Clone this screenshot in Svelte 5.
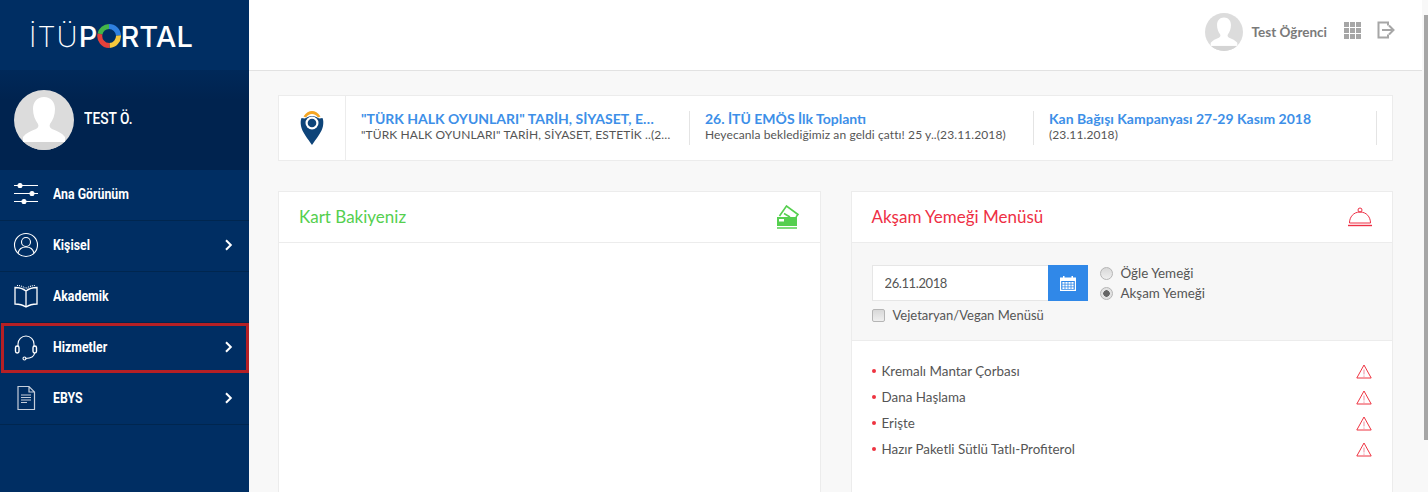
<script>
	const navItems = [
		{ label: 'Ana Görünüm', icon: 'sliders', arrow: false },
		{ label: 'Kişisel', icon: 'person', arrow: true },
		{ label: 'Akademik', icon: 'book', arrow: false },
		{ label: 'Hizmetler', icon: 'headset', arrow: true, marked: true },
		{ label: 'EBYS', icon: 'doc', arrow: true }
	];

	const news = [
		{
			title: '"TÜRK HALK OYUNLARI" TARİH, SİYASET, ESTETİK',
			text: '"TÜRK HALK OYUNLARI" TARİH, SİYASET, ESTETİK ..(26.11.2018)'
		},
		{
			title: '26. İTÜ EMÖS İlk Toplantı',
			text: 'Heyecanla beklediğimiz an geldi çattı! 25 y..(23.11.2018)'
		},
		{
			title: 'Kan Bağışı Kampanyası 27-29 Kasım 2018',
			text: '(23.11.2018)'
		}
	];

	const meals = [
		'Kremalı Mantar Çorbası',
		'Dana Haşlama',
		'Erişte',
		'Hazır Paketli Sütlü Tatlı-Profiterol'
	];
</script>

{#snippet avatar(size)}
	<svg class="avatar" width={size} height={size} viewBox="0 0 60 60">
		<defs>
			<clipPath id="avatar-clip-{size}"><circle cx="30" cy="30" r="30" /></clipPath>
		</defs>
		<circle cx="30" cy="30" r="30" fill="#dcdcdc" />
		<g clip-path="url(#avatar-clip-{size})">
			<path d="M30 7c-7 0-11 5-11 12 0 6 2 11 5 15 1 2 0 4-2 5-5 2-10 4-13 8v5h42v-5c-3-4-8-6-13-8-2-1-3-3-2-5 3-4 5-9 5-15 0-7-4-12-11-12z" fill="#fff" />
			<rect x="0" y="52" width="60" height="8" fill="#d4d4d4" />
		</g>
	</svg>
{/snippet}

<div class="page">
	<aside class="sidebar">
		<div class="logo">
			<span class="logo-thin">İTÜ</span><span class="logo-bold">P</span>
			<svg class="logo-ring" width="24" height="24" viewBox="0 0 24 24" fill="none" stroke-width="5">
				<path d="M3 10a9.500 9.500 0 0 1 9-7.500" stroke="#43b649" />
				<path d="M12 2.500a9.500 9.500 0 0 1 9.500 9" stroke="#2f80e0" />
				<path d="M21.500 11.500a9.500 9.500 0 0 1-9 10" stroke="#f6c83c" />
				<path d="M12.500 21.500a9.500 9.500 0 0 1-9.500-11.500" stroke="#e5413b" />
			</svg>
			<span class="logo-bold">RTAL</span>
		</div>

		<div class="user">
			{@render avatar(60)}
			<span class="user-name">TEST Ö.</span>
		</div>

		<nav>
			{#each navItems as item}
				<a class="nav-row" class:marked={item.marked} href="#top">
					<svg class="nav-icon" width="28" height="28" viewBox="0 0 28 28" fill="none" stroke="#fff" stroke-width="1.100">
						{#if item.icon === 'sliders'}
							<path d="M2 5.500h24M2 13.500h24M2 21.500h24" />
							<circle cx="8" cy="5.500" r="2" fill="#fff" />
							<circle cx="20" cy="13.500" r="2" fill="#fff" />
							<circle cx="12" cy="21.500" r="2" fill="#fff" />
						{:else if item.icon === 'person'}
							<circle cx="14" cy="14" r="11.500" />
							<circle cx="14" cy="11" r="4.500" />
							<path d="M6 22c1-4 4-6 8-6s7 2 8 6" />
						{:else if item.icon === 'book'}
							<path d="M14 9C11 6.500 7 5.500 3 5.500V22c4 0 8 1 11 3 3-2 7-3 11-3V5.500c-4 0-8 1-11 3.500zM14 9v16" stroke-width="1.300" />
							<path d="M5 3.500c3 0 6 1 9 3 3-2 6-3 9-3" stroke-dasharray="1 1" />
						{:else if item.icon === 'headset'}
							<path d="M6 14v-3a8 8 0 0 1 16 0v3" />
							<rect x="3.500" y="13" width="3.500" height="7" rx="1.700" stroke-width="1.400" />
							<rect x="21" y="13" width="3.500" height="7" rx="1.700" stroke-width="1.400" />
							<path d="M22.500 20c0 3-2 5-9 5.500" />
							<circle cx="12.500" cy="25.500" r="1.500" />
						{:else}
							<path d="M6 2.500h11l5.500 5.500v17.500H6zM17 2.500V8h5.500" stroke="#c5cedb" stroke-width="1.200" />
							<path d="M9 11h10M9 13.500h10M9 16h10M9 18.500h6" stroke="#c5cedb" />
						{/if}
					</svg>
					<span class="nav-label"><span>{item.label}</span></span>
					{#if item.arrow}
						<svg class="nav-arrow" width="9" height="12" viewBox="0 0 9 12" fill="none" stroke="#fff" stroke-width="2">
							<path d="M2 1.200 6.800 6 2 10.800" />
						</svg>
					{/if}
				</a>
			{/each}
		</nav>
	</aside>

	<div class="content">
		<header class="topbar">
			{@render avatar(38)}
			<span class="top-name">Test Öğrenci</span>
			<div class="apps">
				{#each Array(9) as _}
					<i></i>
				{/each}
			</div>
			<svg class="logout" width="18" height="18" viewBox="0 0 18 18" fill="none" stroke="#a6a6a6" stroke-width="2">
				<path d="M11 4.500V1.500H1.500v15H11v-3" />
				<path d="M5 9h10" />
				<path d="M12 4.500 16.500 9 12 13.500" />
			</svg>
		</header>

		<main>
			<section class="ticker">
				<div class="ticker-icon">
					<svg width="24" height="36" viewBox="0 0 24 36">
						<path d="M3.500 6.500C6 2.500 9 1 12 1s6 1.500 8.500 5.500L18 7.500C16.500 5.500 14.500 4 12 4S7.500 5.500 6 7.500z" fill="#f5a623" />
						<path d="M1.500 8C.5 10 .5 13 1 16c1 6 7 13 11 19 4-6 10-13 11-19 .5-3 .5-6-.5-8-1.500 0-3 1-4.500 0-1.500-1-3-2-6-2s-4.500 1-6 2c-1.500 1-3 0-4.500 0z" fill="#0e4479" />
						<circle cx="12" cy="13" r="6.500" fill="#fff" />
						<circle cx="12" cy="13" r="4.300" fill="#0e4479" />
					</svg>
				</div>
				{#each news as item}
					<div class="ticker-item">
						<div class="ticker-title">{item.title}</div>
						<div class="ticker-text">{item.text}</div>
					</div>
				{/each}
			</section>

			<div class="cards">
				<section class="card">
					<div class="card-head">
						<h2 class="green">Kart Bakiyeniz</h2>
						<svg width="24" height="24" viewBox="0 0 24 24">
							<path d="M3.500 11 10.500 1 22 9.500 20 12" fill="none" stroke="#55cf4f" stroke-width="1.600" />
							<path d="M8 8.500l6 3.500" stroke="#55cf4f" stroke-width="1.500" />
							<rect x="1" y="12" width="20" height="9" fill="#55cf4f" />
							<rect x="3" y="14" width="5" height="2.500" fill="#fff" />
							<rect x="1" y="22" width="20" height="2" fill="#7fdc7a" />
						</svg>
					</div>
				</section>

				<section class="card">
					<div class="card-head">
						<h2 class="red">Akşam Yemeği Menüsü</h2>
						<svg width="24" height="20" viewBox="0 0 24 20" fill="none" stroke="#ee2f45">
							<circle cx="12" cy="3" r="2" />
							<path d="M1.500 16c0-6 4-11 10.500-11s10.500 5 10.500 11z" />
							<path d="M0 18.500h24" stroke-width="1.400" />
						</svg>
					</div>

					<div class="filters">
						<div class="filter-row">
							<div class="date-group">
								<input class="date-input" value="26.11.2018" readonly />
								<span class="date-btn">
									<svg width="16" height="16" viewBox="0 0 16 16" fill="#fff">
										<path d="M0 2.500h3V1h1.500v1.500h7V1H13v1.500h3V16H0zM1.200 6v8.800h13.600V6z" />
										<path d="M2.400 7h2.200v1.800H2.400zM5.400 7h2.200v1.800H5.400zM8.400 7h2.200v1.800H8.400zM11.400 7h2.200v1.800h-2.200zM2.400 9.600h2.200v1.800H2.400zM5.400 9.600h2.200v1.800H5.400zM8.400 9.600h2.200v1.800H8.400zM11.400 9.600h2.200v1.800h-2.200zM2.400 12.200h2.200V14H2.400zM5.400 12.200h2.200V14H5.400zM8.400 12.200h2.200V14H8.400zM11.400 12.200h2.200V14h-2.200z" />
									</svg>
								</span>
							</div>
							<div class="radios">
								<label><input type="radio" name="meal" /> Öğle Yemeği</label>
								<label><input type="radio" name="meal" checked /> Akşam Yemeği</label>
							</div>
						</div>
						<label class="vegan"><input type="checkbox" /> Vejetaryan/Vegan Menüsü</label>
					</div>

					<ul class="meals">
						{#each meals as meal}
							<li>
								<span class="dot"></span>
								<span class="meal-name">{meal}</span>
								<svg width="16" height="15" viewBox="0 0 16 15" fill="none" stroke="#ee3340">
									<path d="M8 1 .8 14h14.400z" />
									<path d="M8 5.500v5M8 11.500v1.200" stroke="#f0a0b0" stroke-width="1.200" />
								</svg>
							</li>
						{/each}
					</ul>
				</section>
			</div>
		</main>
	</div>

	<div class="scroll-thumb"></div>
</div>

<style>
	:global(body) {
		margin: 0;
		background: #f8f8f8;
	}

	.page {
		position: relative;
		display: flex;
		height: 492px;
		overflow: hidden;
		font-family: Lato, "Noto Sans", sans-serif;
		color: #555;
	}

	.sidebar {
		width: 249px;
		flex-shrink: 0;
		background: #002e63;
	}

	.logo {
		display: flex;
		align-items: center;
		height: 70px;
		padding: 2px 0 0 29px;
		box-sizing: border-box;
		color: #fff;
		font-family: Inter, sans-serif;
		font-size: 29px;
		line-height: 1;
	}

	.logo-thin {
		font-weight: 200;
		letter-spacing: 1px;
	}

	.logo-bold {
		font-weight: 500;
		letter-spacing: 0.100px;
	}

	.logo-ring {
		margin: 0 -0.500px;
	}

	.user {
		display: flex;
		align-items: center;
		gap: 10px;
		height: 100px;
		padding-left: 14px;
		background: linear-gradient(#002e63 -30%, #00234f 30%);
	}

	.avatar {
		flex-shrink: 0;
		display: block;
	}

	.user-name {
		display: inline-block;
		color: #fff;
		font-family: Roboto, sans-serif;
		font-size: 16px;
		font-weight: 500;
		transform: scaleX(0.86);
		transform-origin: left;
		margin-top: -3px;
	}

	.nav-row {
		display: flex;
		align-items: center;
		box-sizing: border-box;
		height: 51px;
		padding: 0 14px 2px 12px;
		border-bottom: 1px solid #00264f;
		color: #fff;
		text-decoration: none;
		font-family: Roboto, sans-serif;
		font-size: 14px;
		font-weight: 700;
	}

	.nav-row.marked {
		margin: 0 0 1px 1px;
		padding: 0 11px 3px 8px;
		border: 3px solid #b52025;
		height: 50px;
	}

	.nav-icon {
		flex-shrink: 0;
		margin-right: 13px;
	}

	.nav-label {
		flex: 1;
	}

	.nav-label span {
		display: inline-block;
		transform: scaleX(0.88);
		transform-origin: left;
	}

	.nav-arrow {
		margin-right: 2px;
	}

	.content {
		flex: 1;
		min-width: 0;
	}

	.topbar {
		display: flex;
		align-items: center;
		justify-content: flex-end;
		box-sizing: border-box;
		height: 71px;
		margin-right: 6px;
		padding: 0 27px 7px 0;
		background: #fff;
		border-bottom: 1px solid #e2e2e2;
	}

	.top-name {
		margin: 0 17px 0 9px;
		font-size: 13.500px;
		font-weight: 700;
		color: #7a7a7a;
	}

	.apps {
		display: grid;
		grid-template-columns: repeat(3, 5px);
		grid-auto-rows: 5px;
		gap: 1px;
		margin: -3px 16px 0 0;
	}

	.apps i {
		background: #a6a6a6;
	}

	.logout {
		margin-top: -3px;
	}

	main {
		padding: 24px 35px 0 29px;
	}

	.ticker {
		display: flex;
		height: 66px;
		box-sizing: border-box;
		background: #fff;
		border: 1px solid #ececec;
	}

	.ticker-icon {
		display: flex;
		align-items: center;
		justify-content: center;
		box-sizing: border-box;
		width: 67px;
		flex-shrink: 0;
		border-right: 1px solid #ececec;
		background-clip: padding-box;
	}

	.ticker-item {
		width: 344px;
		box-sizing: border-box;
		height: 34px;
		margin-top: 15px;
		padding: 0 15px;
		border-right: 1px solid #e4e4e4;
		line-height: 16px;
	}

	.ticker-item:last-child {
		width: 343px;
	}

	.ticker-title,
	.ticker-text {
		overflow: hidden;
		text-overflow: ellipsis;
		white-space: nowrap;
	}

	.ticker-title {
		padding-right: 14px;
		font-size: 14px;
		font-weight: 700;
		color: #3d8fe8;
	}

	.ticker-text {
		font-size: 12px;
		letter-spacing: 0.100px;
		color: #555;
	}

	.cards {
		display: grid;
		grid-template-columns: 1fr 1fr;
		gap: 30px;
		margin-top: 30px;
	}

	.card {
		background: #fff;
		border: 1px solid #ececec;
		height: 340px;
	}

	.card-head {
		display: flex;
		align-items: center;
		justify-content: space-between;
		height: 50px;
		padding: 0 20px;
		border-bottom: 1px solid #ececec;
	}

	h2 {
		margin: -2px 0 0;
		font-size: 17px;
		font-weight: 400;
	}

	.green {
		color: #55cf4f;
	}

	.red {
		color: #ee2f45;
	}

	.filters {
		height: 98px;
		padding: 22px 20px 0;
		box-sizing: border-box;
		background: #f7f7f7;
		border-bottom: 1px solid #ececec;
		font-size: 13.400px;
	}

	.filter-row {
		display: flex;
		gap: 12px;
	}

	.date-group {
		display: flex;
		width: 216px;
		height: 36px;
	}

	.date-input {
		flex: 1;
		min-width: 0;
		box-sizing: border-box;
		padding: 0 12px;
		border: 1px solid #e6e6e6;
		border-right: 0;
		background: #fff;
		font: inherit;
		font-size: 13px;
		letter-spacing: -0.400px;
		color: #555;
		outline: none;
	}

	.date-btn {
		display: flex;
		align-items: center;
		justify-content: center;
		width: 40px;
		background: #3088e8;
	}

	.radios {
		display: flex;
		flex-direction: column;
		gap: 4px;
	}

	label {
		display: flex;
		align-items: center;
		gap: 8px;
		line-height: 16px;
		color: #555;
	}

	label input {
		appearance: none;
		box-sizing: border-box;
		width: 13px;
		height: 13px;
		margin: 0;
		background: linear-gradient(#d8d8d8, #efefef);
		border: 1px solid #b5b5b5;
	}

	label input[type='radio'] {
		border-radius: 50%;
	}

	label input[type='checkbox'] {
		border-radius: 2px;
	}

	label input:checked {
		background: radial-gradient(circle, #666 0 3px, #e2e2e2 3.500px);
	}

	.vegan {
		margin-top: 6px;
		font-size: 13px;
	}

	.meals {
		list-style: none;
		margin: 0;
		padding: 17px 20px 0;
	}

	.meals li {
		display: flex;
		align-items: center;
		height: 26px;
		font-size: 13.400px;
	}

	.dot {
		width: 4px;
		height: 4px;
		margin-right: 6px;
		border-radius: 50%;
		background: #ee3340;
	}

	.meal-name {
		flex: 1;
	}

	.scroll-thumb {
		position: absolute;
		top: 15px;
		right: 0;
		width: 4px;
		height: 425px;
		background: #a6a6a6;
	}
</style>
